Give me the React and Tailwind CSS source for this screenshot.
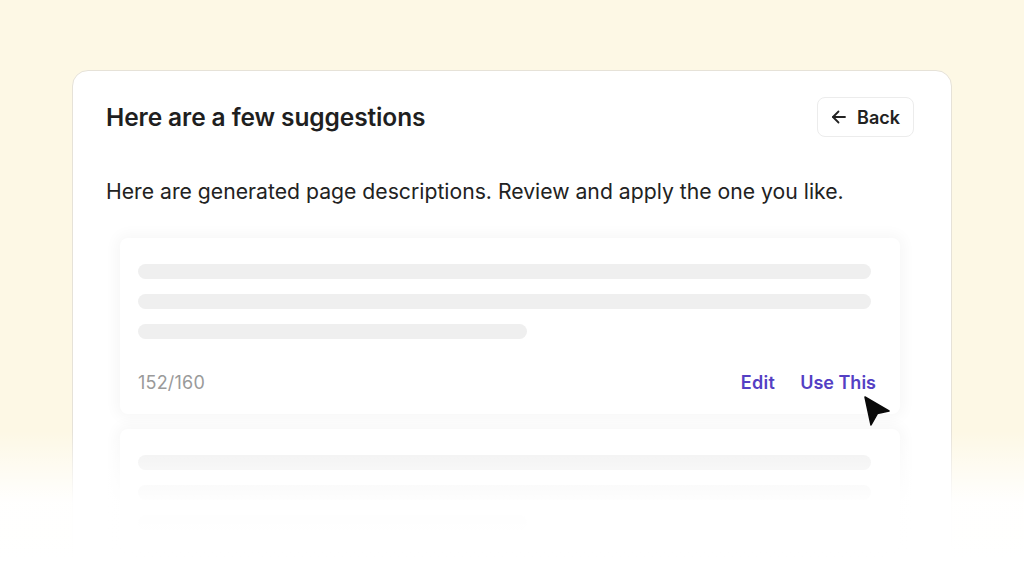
import React from "react";

function Skeleton({ w }) {
  return <div className={`h-[15px] rounded-full bg-[#efefef] ${w}`} />;
}

function SuggestionCard({ showFooter, children }) {
  return (
    <div className="relative rounded-lg bg-white shadow-[0_0_14px_4px_rgba(0,0,0,0.035)] pl-[18px] pr-[24px] pt-[26px] pb-[20px]">
      <div className="flex flex-col gap-[15px] pr-[5px]">
        <Skeleton w="w-full" />
        <Skeleton w="w-full" />
        <Skeleton w="w-[389px]" />
      </div>
      {showFooter && (
        <div className="mt-[31px] flex items-center justify-between h-[24px] text-[18px]">
          <span className="text-[#9a9a9a] tracking-[0.2px]">152/160</span>
          <div className="flex items-center gap-[25px] font-semibold text-[#5440c4]">
            <span className="tracking-[0.3px]">Edit</span>
            <span>Use This</span>
          </div>
        </div>
      )}
      {children}
    </div>
  );
}

export default function App() {
  return (
    <div
      className="relative min-h-[561px] h-[561px] overflow-hidden bg-[#fdf8e5] pt-[70px] px-[72px]"
      style={{ fontFamily: "Inter, 'Noto Sans', sans-serif" }}
    >
      <div className="rounded-t-[16px] border border-[#e6e2d8] bg-white pl-[33px] pr-[37px] pt-[26px] h-[600px]">
        <div className="flex items-center justify-between">
          <h1 className="text-[24.5px] leading-[40px] font-semibold text-[#1f1f1f] tracking-[-0.1px]">
            Here are a few suggestions
          </h1>
          <button className="flex h-[40px] items-center gap-[10px] rounded-lg border border-[#ececec] bg-white pl-[13px] pr-[13px] text-[18px] font-semibold text-[#222]">
            <svg width="16" height="16" viewBox="0 0 16 16" fill="none" stroke="#222" strokeWidth="1.8" strokeLinecap="round" strokeLinejoin="round">
              <path d="M14 8H2" />
              <path d="M7.5 2.5L2 8l5.5 5.5" />
            </svg>
            Back
          </button>
        </div>
        <p className="mt-[40px] text-[21.2px] leading-[28px] text-[#222]">
          Here are generated page descriptions. Review and apply the one you like.
        </p>
        <div className="mt-[33px] flex flex-col gap-[15px] px-[14px]">
          <SuggestionCard showFooter>
            <svg
              className="absolute left-[742px] top-[156px]"
              width="30"
              height="32"
              viewBox="0 0 30 32"
            >
              <path
                d="M3 3 L27 17 L15.5 19.5 L9 31 Z"
                fill="#0a0a0a"
                stroke="#0a0a0a"
                strokeWidth="1.5"
                strokeLinejoin="round"
              />
            </svg>
          </SuggestionCard>
          <SuggestionCard showFooter={false} />
        </div>
      </div>
      <div className="pointer-events-none absolute inset-x-0 bottom-0 h-[130px] bg-gradient-to-b from-white/0 via-white/95 via-55% to-white" />
    </div>
  );
}
